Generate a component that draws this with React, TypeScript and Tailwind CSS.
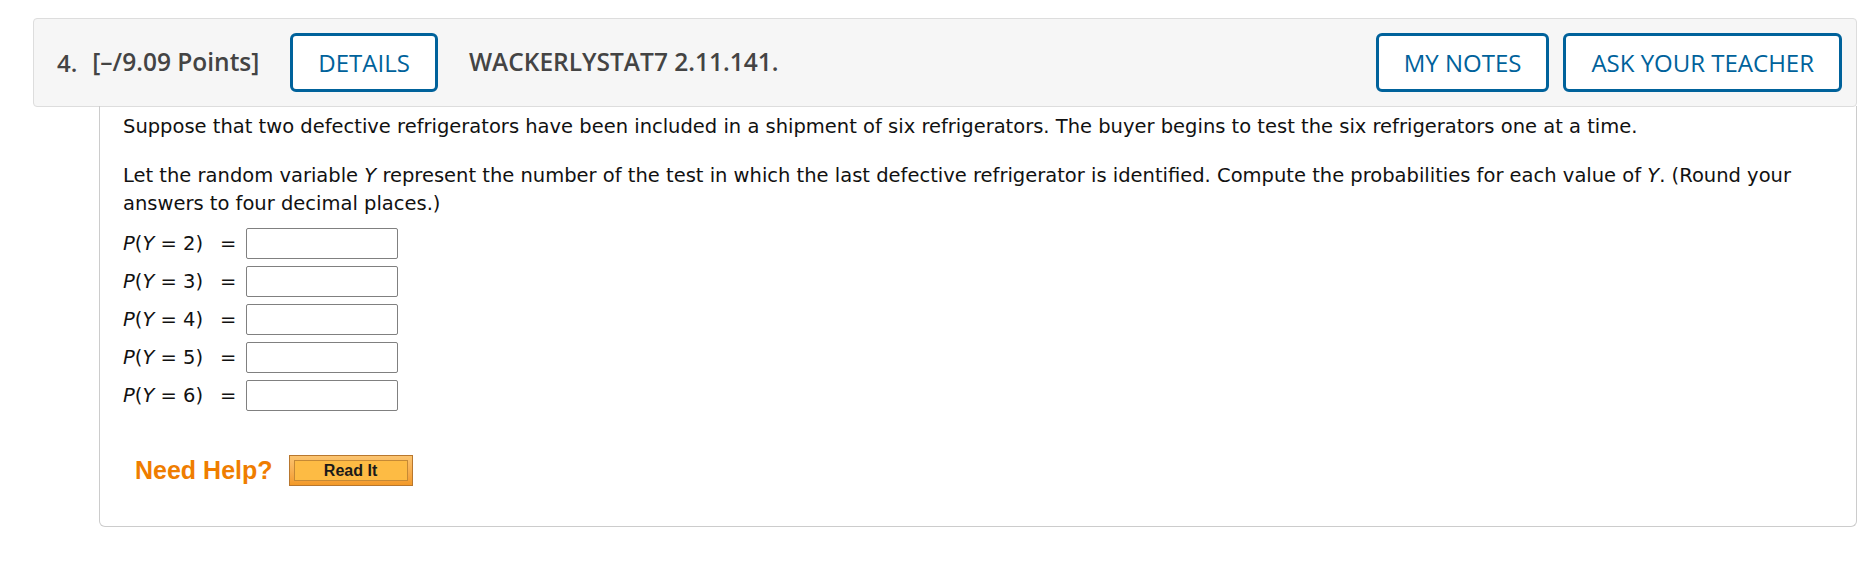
import * as React from "react"

const rows = [2, 3, 4, 5, 6]

function OutlineButton({ label }: { label: string }) {
  return (
    <button className="h-[59px] px-[25px] border-[3px] border-[#00629b] rounded-[6px] bg-white text-[#00629b] text-[24px] leading-none">
      {label}
    </button>
  )
}

export default function App() {
  return (
    <div className="min-h-[586px] bg-white pt-[18px] pl-[33px] pr-[7px] font-[family-name:'Open_Sans',sans-serif]">
      {/* Question header */}
      <div className="h-[89px] flex items-center pl-[23px] pr-[14px] bg-[#f6f6f6] border border-[#dddddd] rounded-[4px] text-[#444444]">
        <span className="text-[24px] font-semibold">4.</span>
        <span className="ml-[15px] text-[24.5px] font-semibold">[–/9.09 Points]</span>
        <div className="ml-[31px]">
          <OutlineButton label="DETAILS" />
        </div>
        <span className="ml-[31px] text-[24.5px] font-semibold">WACKERLYSTAT7 2.11.141.</span>
        <div className="ml-auto flex gap-[14px]">
          <OutlineButton label="MY NOTES" />
          <OutlineButton label="ASK YOUR TEACHER" />
        </div>
      </div>

      {/* Question body */}
      <div className="ml-[66px] -mt-px h-[421px] border-x border-b border-[#cccccc] rounded-b-[6px] pt-[7px] pl-[23px] pr-[20px] font-[family-name:'DejaVu_Sans',Verdana,sans-serif] text-[19.5px] leading-[28px] text-[#111111]">
        <p>
          Suppose that two defective refrigerators have been included in a shipment of six refrigerators. The buyer begins
          to test the six refrigerators one at a time.
        </p>
        <p className="mt-[21px]">
          Let the random variable <i>Y</i> represent the number of the test in which the last defective refrigerator is
          identified. Compute the probabilities for each value of <i>Y</i>. (Round your answers to four decimal places.)
        </p>

        <div className="mt-[10px] flex flex-col gap-[7px]">
          {rows.map((n) => (
            <div key={n} className="flex items-center h-[31px]">
              <span className="w-[97px] whitespace-nowrap">
                <i>P</i>(<i>Y</i> = {n})
              </span>
              <span className="w-[12px]">=</span>
              <input
                type="text"
                className="ml-[14px] w-[152px] h-[31px] border border-[#808080] rounded-[2px] bg-white"
              />
            </div>
          ))}
        </div>

        <div className="mt-[44px] flex items-center">
          <span className="ml-[12px] font-[family-name:'Liberation_Sans',Arial,sans-serif] font-bold text-[25px] leading-none text-[#ef7d00]">
            Need Help?
          </span>
          <button className="ml-[16px] w-[124px] h-[31px] p-[4px] bg-gradient-to-b from-[#fbc470] to-[#f39a28] border border-[#b8772e]">
            <span className="flex items-center justify-center w-full h-full bg-[#fdbb44] border border-[#c58935] font-[family-name:'Liberation_Sans',Arial,sans-serif] font-bold text-[16px] leading-none text-[#1a1a1a]">
              Read It
            </span>
          </button>
        </div>
      </div>
    </div>
  )
}
